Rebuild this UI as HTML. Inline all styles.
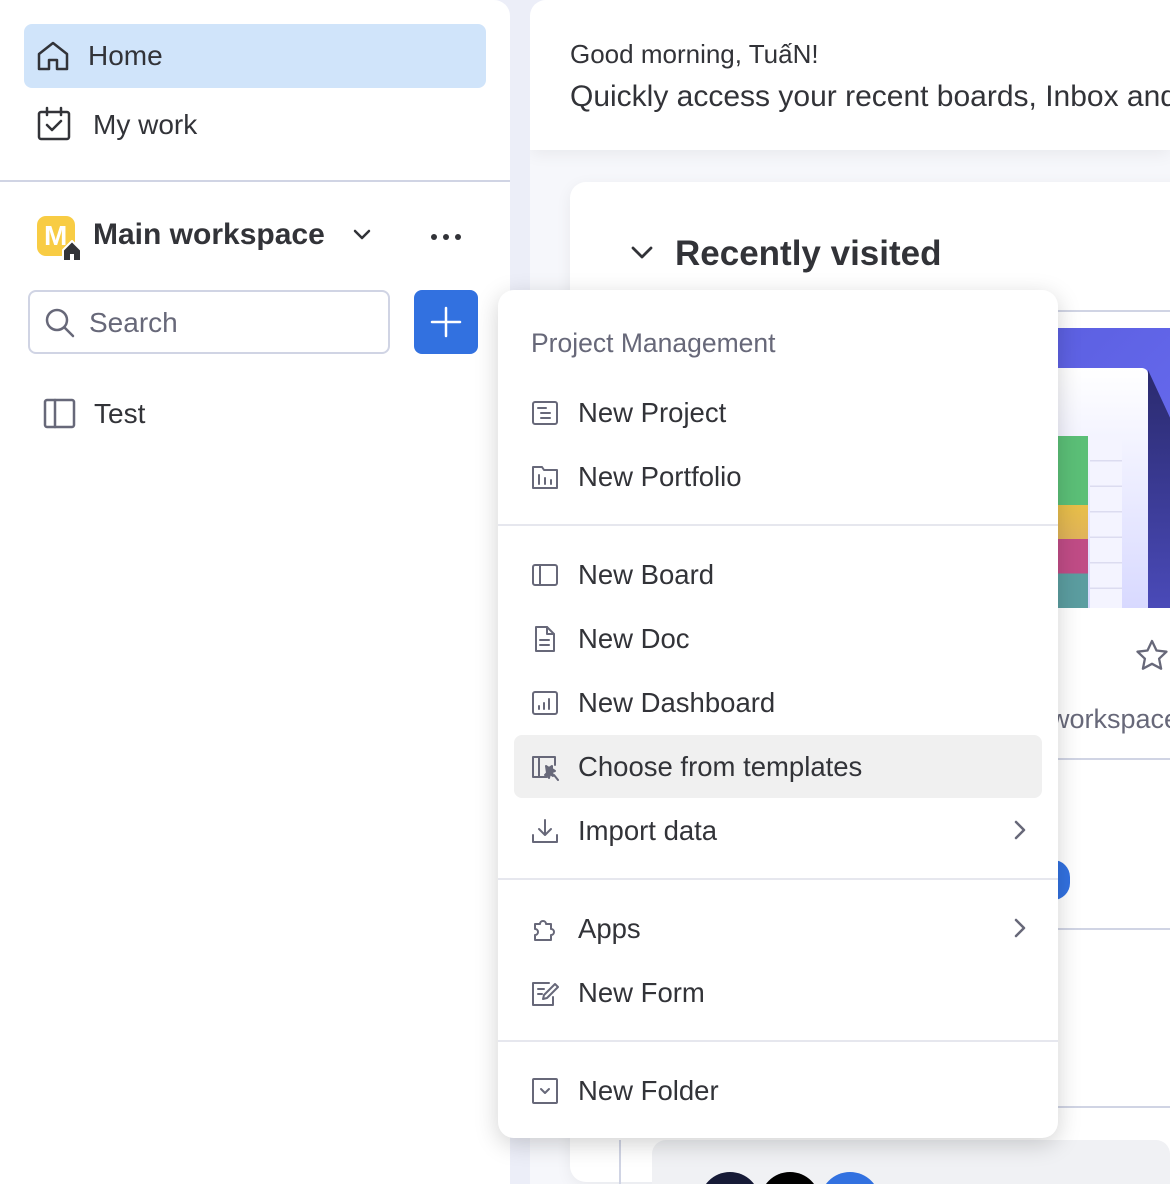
<!DOCTYPE html>
<html><head><meta charset="utf-8"><style>
*{box-sizing:border-box;margin:0;padding:0}
body{width:1170px;height:1184px;overflow:hidden;position:relative;background:#eceef8;font-family:"Liberation Sans","Noto Sans CJK SC",sans-serif;color:#323338}
.abs{position:absolute}
.side{left:0;top:0;width:510px;height:1184px;background:#fff;border-radius:0 16px 0 0}
.t{position:absolute;white-space:nowrap}
.main{left:530px;top:0;width:640px;height:1184px;background:#f6f7fb;border-radius:16px 0 0 0;overflow:hidden}
.menu{left:498px;top:290px;width:560px;height:848px;background:#fff;border-radius:16px;box-shadow:0 6px 24px rgba(0,0,0,.18)}
.mi{position:absolute;left:80px;font-size:27.5px;color:#323338;white-space:nowrap}
.ic{position:absolute;left:33px;width:28px;height:28px}
.div{position:absolute;left:0;width:560px;height:2px;background:#e6e7ee}
svg{fill:none;stroke:#676879;stroke-width:2;stroke-linecap:round;stroke-linejoin:round}
</style></head><body>
<div class="abs side">
  <div class="abs" style="left:24px;top:24px;width:462px;height:64px;background:#d0e4fa;border-radius:8px"></div>
  <svg class="abs" style="left:36px;top:40px" width="34" height="32" viewBox="0 0 34 32"><path d="M3 14 L17 3 L31 14 V29 H21 V20 H13 V29 H3 Z" stroke="#323338" stroke-width="2.5"/></svg>
  <div class="t" style="left:88px;top:40px;font-size:28px">Home</div>
  <svg class="abs" style="left:36px;top:106px" width="36" height="36" viewBox="0 0 36 36"><rect x="3" y="6" width="30" height="27" rx="2" stroke="#323338" stroke-width="2.5"/><path d="M11 2V9M25 2V9M11 19l5 5 9-9" stroke="#323338" stroke-width="2.5"/></svg>
  <div class="t" style="left:93px;top:109px;font-size:28px">My work</div>
  <div class="abs" style="left:0;top:180px;width:510px;height:2px;background:#d0d4e4"></div>
  <div class="abs" style="left:37px;top:216px;width:38px;height:40px;background:#f8cc44;border-radius:9px"></div>
  <div class="t" style="left:44px;top:220px;font-size:28px;color:#fff;font-weight:bold">M</div>
  <svg class="abs" style="left:62px;top:240px" width="20" height="22" viewBox="0 0 20 22"><path d="M1 10 L10 1 L19 10 V21 H1 Z" fill="#323338" stroke="#fff" stroke-width="2"/><rect x="8" y="14" width="4" height="7" fill="#fff" stroke="none"/></svg>
  <div class="t" style="left:93px;top:218px;font-size:30px;font-weight:bold">Main workspace</div>
  <svg class="abs" style="left:352px;top:228px" width="20" height="14" viewBox="0 0 20 14"><path d="M3 3l7 7 7-7" stroke="#323338" stroke-width="2.5"/></svg>
  <div class="abs" style="left:431px;top:234px;width:6px;height:6px;border-radius:3px;background:#323338;box-shadow:12px 0 #323338,24px 0 #323338"></div>
  <div class="abs" style="left:28px;top:290px;width:362px;height:64px;border:2px solid #d0d4e4;border-radius:8px"></div>
  <svg class="abs" style="left:43px;top:306px" width="34" height="34" viewBox="0 0 34 34"><circle cx="14" cy="14" r="10" stroke-width="2.5"/><path d="M22 22l8 8" stroke-width="2.5"/></svg>
  <div class="t" style="left:89px;top:307px;font-size:28px;color:#676879">Search</div>
  <div class="abs" style="left:414px;top:290px;width:64px;height:64px;background:#3271e0;border-radius:8px"></div>
  <svg class="abs" style="left:428px;top:304px" width="36" height="36" viewBox="0 0 36 36"><path d="M18 4V32M4 18H32" stroke="#fff" stroke-width="2.5"/></svg>
  <svg class="abs" style="left:43px;top:398px" width="34" height="32" viewBox="0 0 34 32"><rect x="2" y="2" width="29" height="27" rx="2" stroke-width="2.5"/><path d="M12 2V29" stroke-width="2.5"/></svg>
  <div class="t" style="left:94px;top:398px;font-size:28px">Test</div>
</div>
<div class="abs main">
  <div class="abs" style="left:0;top:0;width:640px;height:150px;background:#fff;box-shadow:0 4px 16px rgba(0,0,0,.06)"></div>
  <div class="t" style="left:40px;top:39px;font-size:26px">Good morning, TuấN!</div>
  <div class="t" style="left:40px;top:80px;font-size:30px">Quickly access your recent boards, Inbox and</div>
  <div class="abs" style="left:40px;top:182px;width:640px;height:1000px;background:#fff;border-radius:16px;box-shadow:0 4px 16px rgba(0,0,0,.06)"></div>
  <svg class="abs" style="left:100px;top:244px" width="24" height="18" viewBox="0 0 24 18"><path d="M3 4l9 9 9-9" stroke="#323338" stroke-width="2.8"/></svg>
  <div class="t" style="left:145px;top:234px;font-size:35px;font-weight:bold">Recently visited</div>
  <div class="abs" style="left:0;top:310px;width:640px;height:2px;background:#d0d4e4"></div>
  <div class="abs" style="left:500px;top:328px;width:140px;height:280px;background:linear-gradient(135deg,#5b5fe0,#6c6ff5)"></div>
  <div class="abs" style="left:500px;top:368px;width:118px;height:240px;background:linear-gradient(#fff,#d8d9ff);border-radius:0 6px 0 0"></div>
  <div class="abs" style="left:618px;top:370px;width:22px;height:238px;background:linear-gradient(#2a2a6e,#4a4ab8);clip-path:polygon(0 0,100% 20%,100% 100%,0 100%)"></div>
  <div class="abs" style="left:528px;top:436px;width:30px;height:172px;background:linear-gradient(#5bbf77 0,#5bbf77 40%,#e8bf48 40%,#e0b35a 60%,#c04c86 60%,#c04c86 80%,#5b9da0 80%)"></div>
  <div class="abs" style="left:560px;top:436px;width:32px;height:172px;background:repeating-linear-gradient(#f4f4ff 0,#f4f4ff 24px,#dcdcf0 24px,#dcdcf0 25.5px)"></div>
  <svg class="abs" style="left:604px;top:638px" width="36" height="36" viewBox="0 0 36 36"><path d="M18 3l4.5 9.5 10 1.2-7.4 7 2 10L18 25.8 8.9 30.7l2-10-7.4-7 10-1.2z" stroke-width="2.3"/></svg>
  <div class="t" style="left:520px;top:704px;font-size:27px;color:#676879">workspace</div>
  <div class="abs" style="left:0;top:758px;width:640px;height:2px;background:#d0d4e4"></div>
  <div class="abs" style="left:506px;top:860px;width:34px;height:40px;border-radius:20px;background:#3271e0"></div>
  <div class="abs" style="left:0;top:928px;width:640px;height:2px;background:#d0d4e4"></div>
  <div class="abs" style="left:0;top:1106px;width:640px;height:2px;background:#d0d4e4"></div>
  <div class="abs" style="left:89px;top:1140px;width:2px;height:44px;background:#d0d4e4"></div>
  <div class="abs" style="left:122px;top:1140px;width:518px;height:60px;background:#f0f1f4;border-radius:14px"></div>
  <div class="abs" style="left:170px;top:1172px;width:60px;height:60px;border-radius:30px;background:#161a36"></div>
  <div class="abs" style="left:230px;top:1172px;width:60px;height:60px;border-radius:30px;background:#000"></div>
  <div class="abs" style="left:290px;top:1172px;width:60px;height:60px;border-radius:30px;background:#3271e0"></div>
</div>
<div class="abs menu">
  <div class="t" style="left:33px;top:38px;font-size:26.5px;color:#676879">Project Management</div>
  <svg class="ic" style="top:109px" viewBox="0 0 28 28"><rect x="2" y="3" width="24" height="22" rx="2"/><path d="M7 9H15M10 14H19M10 19H19"/></svg>
  <div class="mi" style="top:107px">New Project</div>
  <svg class="ic" style="top:173px" viewBox="0 0 28 28"><path d="M2 4H11l2 3H26V25H2Z"/><path d="M8 12V21M14 15V21M20 17V21"/></svg>
  <div class="mi" style="top:171px">New Portfolio</div>
  <div class="div" style="top:234px"></div>
  <svg class="ic" style="top:271px" viewBox="0 0 28 28"><rect x="2" y="4" width="24" height="20" rx="2"/><path d="M9 4V24"/></svg>
  <div class="mi" style="top:269px">New Board</div>
  <svg class="ic" style="top:335px" viewBox="0 0 28 28"><path d="M5 2H16l7 7V26H5Z"/><path d="M16 2V9H23M9 15H18M9 20H18"/></svg>
  <div class="mi" style="top:333px">New Doc</div>
  <svg class="ic" style="top:399px" viewBox="0 0 28 28"><rect x="2" y="3" width="24" height="22" rx="2"/><path d="M8 20V17M13 20V14M18 20V10"/></svg>
  <div class="mi" style="top:397px">New Dashboard</div>
  <div class="abs" style="left:16px;top:445px;width:528px;height:63px;background:#f0f0f0;border-radius:8px"></div>
  <svg class="ic" style="top:463px" viewBox="0 0 28 28"><path d="M16 24H2V4H24V12"/><path d="M8 4V24"/><path d="M15 13l3 2 3-2 0 3 3 2-3 1 1 4-3-2-1 4-1-3-3 0 2-2z" fill="#676879"/><path d="M23 22l4 5"/></svg>
  <div class="mi" style="top:461px">Choose from templates</div>
  <svg class="ic" style="top:527px" viewBox="0 0 28 28"><path d="M14 3V18M8 12l6 6 6-6M2 18V25H26V18"/></svg>
  <div class="mi" style="top:525px">Import data</div>
  <svg class="abs" style="left:512px;top:528px" width="20" height="24" viewBox="0 0 20 24"><path d="M6 4l8 8-8 8" stroke-width="2.5"/></svg>
  <div class="div" style="top:588px"></div>
  <svg class="ic" style="top:625px" viewBox="0 0 28 28"><path d="M4 9H9a3 3 0 1 1 6 0H20V14a3 3 0 1 1 0 6V25H4V20a3 3 0 1 0 0-6Z"/></svg>
  <div class="mi" style="top:623px">Apps</div>
  <svg class="abs" style="left:512px;top:626px" width="20" height="24" viewBox="0 0 20 24"><path d="M6 4l8 8-8 8" stroke-width="2.5"/></svg>
  <svg class="ic" style="top:689px" viewBox="0 0 28 28"><path d="M18 4H2V26H22V18"/><path d="M7 10H13M7 15H11"/><path d="M24 5l3 3-11 11-4 1 1-4z"/></svg>
  <div class="mi" style="top:687px">New Form</div>
  <div class="div" style="top:750px"></div>
  <svg class="ic" style="top:787px" viewBox="0 0 28 28"><rect x="2" y="2" width="24" height="24" rx="1"/><path d="M10 12l4 4 4-4"/></svg>
  <div class="mi" style="top:785px">New Folder</div>
</div>
</body></html>
